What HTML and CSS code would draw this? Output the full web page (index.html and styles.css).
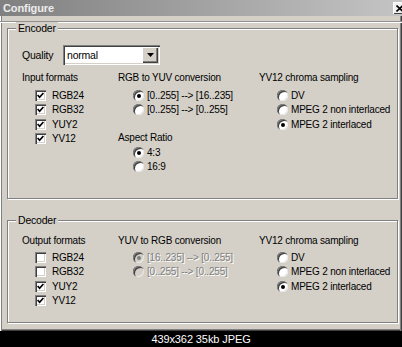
FILE: index.html
```html
<!DOCTYPE html>
<html lang="en">
<head>
  <meta charset="UTF-8">
  <title>Configure</title>
  <link rel="stylesheet" href="styles.css">
</head>
<body>
  <div class="window">
    <div class="titlebar">
      <span class="title">Configure</span>
      <span class="close">
        <svg width="8" height="7" viewBox="0 0 8 7"><path d="M0.5 0.5 L7 6.5 M7 0.5 L0.5 6.5" stroke="#000" stroke-width="1.6"/></svg>
      </span>
    </div>
    <div class="frame-edge"></div>

    <div class="client">
      <fieldset class="group encoder">
        <legend>Encoder</legend>
        <div class="group-body">
          <div class="quality">
            <label>Quality</label>
            <div class="combo">
              <span class="combo-text">normal</span>
              <span class="combo-btn">
                <svg width="7" height="4" viewBox="0 0 7 4"><path d="M0 0 H7 L3.5 4 Z" fill="#000"/></svg>
              </span>
            </div>
          </div>
          <div class="cols">
            <div class="col col-formats">
              <div class="heading">Input formats</div>
              <div class="opt"><span class="check on"><svg width="7" height="7" viewBox="0 0 7 7"><path d="M0.6 3 L2.6 5.2 L6.4 1" fill="none" stroke="#000" stroke-width="1.7"/></svg></span>RGB24</div>
              <div class="opt"><span class="check on"><svg width="7" height="7" viewBox="0 0 7 7"><path d="M0.6 3 L2.6 5.2 L6.4 1" fill="none" stroke="#000" stroke-width="1.7"/></svg></span>RGB32</div>
              <div class="opt"><span class="check on"><svg width="7" height="7" viewBox="0 0 7 7"><path d="M0.6 3 L2.6 5.2 L6.4 1" fill="none" stroke="#000" stroke-width="1.7"/></svg></span>YUY2</div>
              <div class="opt"><span class="check on"><svg width="7" height="7" viewBox="0 0 7 7"><path d="M0.6 3 L2.6 5.2 L6.4 1" fill="none" stroke="#000" stroke-width="1.7"/></svg></span>YV12</div>
            </div>
            <div class="col col-conv">
              <div class="heading">RGB to YUV conversion</div>
              <div class="opt"><span class="radio on"></span>[0..255] --&gt; [16..235]</div>
              <div class="opt"><span class="radio"></span>[0..255] --&gt; [0..255]</div>
              <div class="heading aspect">Aspect Ratio</div>
              <div class="opt"><span class="radio on"></span>4:3</div>
              <div class="opt"><span class="radio"></span>16:9</div>
            </div>
            <div class="col col-chroma">
              <div class="heading">YV12 chroma sampling</div>
              <div class="opt"><span class="radio"></span>DV</div>
              <div class="opt"><span class="radio"></span>MPEG 2 non interlaced</div>
              <div class="opt"><span class="radio on"></span>MPEG 2 interlaced</div>
            </div>
          </div>
        </div>
      </fieldset>

      <fieldset class="group decoder">
        <legend>Decoder</legend>
        <div class="group-body">
          <div class="cols">
            <div class="col col-formats">
              <div class="heading">Output formats</div>
              <div class="opt"><span class="check"></span>RGB24</div>
              <div class="opt"><span class="check"></span>RGB32</div>
              <div class="opt"><span class="check on"><svg width="7" height="7" viewBox="0 0 7 7"><path d="M0.6 3 L2.6 5.2 L6.4 1" fill="none" stroke="#000" stroke-width="1.7"/></svg></span>YUY2</div>
              <div class="opt"><span class="check on"><svg width="7" height="7" viewBox="0 0 7 7"><path d="M0.6 3 L2.6 5.2 L6.4 1" fill="none" stroke="#000" stroke-width="1.7"/></svg></span>YV12</div>
            </div>
            <div class="col col-conv">
              <div class="heading">YUV to RGB conversion</div>
              <div class="opt disabled"><span class="radio on"></span>[16..235] --&gt; [0..255]</div>
              <div class="opt disabled"><span class="radio"></span>[0..255] --&gt; [0..255]</div>
            </div>
            <div class="col col-chroma">
              <div class="heading">YV12 chroma sampling</div>
              <div class="opt"><span class="radio"></span>DV</div>
              <div class="opt"><span class="radio"></span>MPEG 2 non interlaced</div>
              <div class="opt"><span class="radio on"></span>MPEG 2 interlaced</div>
            </div>
          </div>
        </div>
      </fieldset>
    </div>
  </div>

  <div class="caption">439x362 35kb JPEG</div>
</body>
</html>
```

FILE: styles.css
```css
* {
  box-sizing: border-box;
}
body {
  margin: 0;
  width: 402px;
  height: 347px;
  overflow: hidden;
  background-color: #000;
  font-family: "Liberation Sans", Arial, sans-serif;
  font-size: 10px;
  letter-spacing: -0.2px;
  color: #000;
}
.window {
  height: 331px;
  background-color: #d4d0c8;
  box-shadow: inset 1px 0 #fff, inset 2px 0 #808080,
    inset -1px 0 #404040, inset -2px 0 #808080,
    inset 0 -1px #404040, inset 0 -2px #808080;
}
.titlebar {
  height: 16px;
  display: flex;
  align-items: center;
  justify-content: space-between;
  padding-left: 3px;
  overflow: hidden;
  background: linear-gradient(to right, #808080, #c4c4c4);
}
.title {
  font-weight: bold;
  font-size: 11px;
  letter-spacing: -0.1px;
  color: #ececec;
}
.close {
  width: 14px;
  height: 12px;
  margin-right: -5px;
  display: flex;
  align-items: center;
  justify-content: center;
  background-color: #f0f0f0;
  box-shadow: inset 1px 1px #fff, inset -1px -1px #404040;
}
.frame-edge {
  height: 6px;
  border-bottom: 1px solid #909090;
  box-shadow: 0 1px #fff;
}
.client {
  padding: 0 4px 0 7px;
}
.group {
  margin: 0;
  padding: 0;
  min-width: 0;
  border: 1px solid #808080;
  box-shadow: inset 1px 1px #fff, 1px 1px #fff;
}
.group legend {
  margin-left: 8px;
  padding: 0 2px;
  line-height: 12px;
  font-size: 10.5px;
  background-color: #d4d0c8;
}
.encoder .group-body {
  padding: 11px 0 24px 14px;
}
.decoder {
  margin-top: 15px;
}
.decoder .group-body {
  padding: 8px 0 14px 14px;
}
.quality {
  display: flex;
  align-items: center;
  height: 20px;
}
.quality label {
  width: 41px;
  font-size: 10.5px;
}
.combo {
  width: 97px;
  height: 20px;
  display: flex;
  align-items: center;
  padding: 2px;
  background-color: #fff;
  box-shadow: inset 1px 1px #808080, inset 2px 2px #404040,
    inset -1px -1px #fff, inset -2px -2px #d4d0c8;
}
.combo-text {
  flex: 1;
  padding-left: 2px;
  font-size: 10.5px;
}
.combo-btn {
  width: 16px;
  height: 16px;
  display: flex;
  align-items: center;
  justify-content: center;
  background-color: #d4d0c8;
  box-shadow: inset 1px 1px #fff, inset -1px -1px #404040, inset -2px -2px #808080;
}
.cols {
  display: grid;
  grid-template-columns: 96px 141px 1fr;
}
.encoder .cols {
  margin-top: 6px;
}
.heading {
  height: 14px;
  line-height: 14px;
  margin-bottom: 3px;
  white-space: nowrap;
}
.decoder .heading {
  margin-bottom: 2px;
}
.heading.aspect {
  margin-top: 14px;
  margin-bottom: 0;
}
.opt {
  height: 14.5px;
  display: flex;
  align-items: center;
  white-space: nowrap;
}
.col-formats .opt {
  padding-left: 13px;
}
.col-conv .opt {
  padding-left: 15px;
}
.col-chroma .opt {
  padding-left: 18px;
}
.check {
  width: 11px;
  height: 11px;
  flex: none;
  margin-right: 6px;
  display: flex;
  align-items: center;
  justify-content: center;
  background-color: #fff;
  box-shadow: inset 1px 1px #808080, inset 2px 2px #404040,
    inset -1px -1px #fff, inset -2px -2px #d4d0c8;
}
.radio {
  position: relative;
  width: 11px;
  height: 11px;
  flex: none;
  margin-right: 3px;
  border-radius: 50%;
  background-color: #fff;
  box-shadow: inset 1px 1px #808080, inset 2px 2px #404040,
    inset -1px -1px #e8e8e8;
}
.radio.on::after {
  content: "";
  position: absolute;
  left: 4px;
  top: 4px;
  width: 4px;
  height: 4px;
  border-radius: 50%;
  background-color: #000;
}
.opt.disabled {
  color: #808080;
  text-shadow: 1px 1px #fff;
}
.opt.disabled .radio {
  background-color: #d4d0c8;
}
.opt.disabled .radio.on::after {
  background-color: #808080;
}
.caption {
  height: 16px;
  line-height: 16px;
  text-align: center;
  color: #fff;
  font-size: 11px;
  letter-spacing: -0.1px;
}
```
